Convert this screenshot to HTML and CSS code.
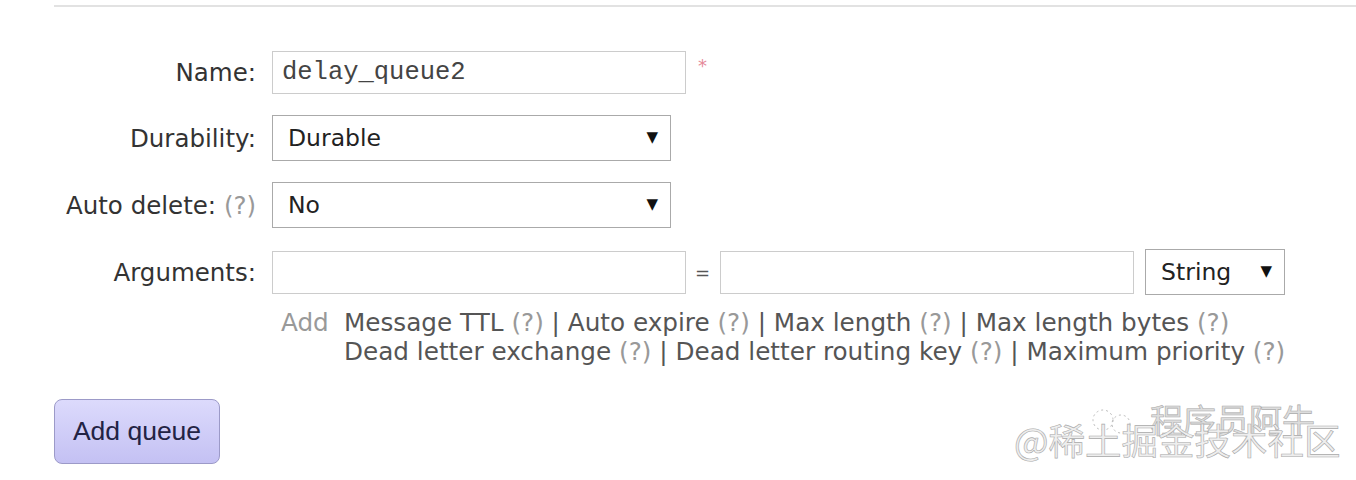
FILE: index.html
```html
<!DOCTYPE html>
<html>
<head>
<meta charset="utf-8">
<link rel="stylesheet" href="styles.css">
</head>
<body>
<div class="rule"></div>
<form class="form">
  <label class="lbl">Name:</label>
  <div class="field">
    <div class="input name-input">delay_queue2</div>
    <span class="req">*</span>
  </div>

  <label class="lbl">Durability:</label>
  <div class="field">
    <div class="select wide">Durable<span class="arrow">▼</span></div>
  </div>

  <label class="lbl">Auto delete: <span class="help">(?)</span></label>
  <div class="field">
    <div class="select wide">No<span class="arrow">▼</span></div>
  </div>

  <label class="lbl">Arguments:</label>
  <div class="field">
    <div class="input arg-input"></div>
    <span class="eq">=</span>
    <div class="input arg-input arg-val"></div>
    <div class="select small">String<span class="arrow">▼</span></div>
  </div>

  <span></span>
  <div class="adds">
    <span class="add">Add</span>
    <div class="lines">
      <div>Message TTL <span class="help">(?)</span> | Auto expire <span class="help">(?)</span> | Max length <span class="help">(?)</span> | Max length bytes <span class="help">(?)</span></div>
      <div>Dead letter exchange <span class="help">(?)</span> | Dead letter routing key <span class="help">(?)</span> | Maximum priority <span class="help">(?)</span></div>
    </div>
  </div>
</form>
<div class="actions">
  <button class="btn" type="button">Add queue</button>
</div>
<div class="watermark">
  <svg class="wm-icon" width="60" height="30" viewBox="0 0 60 30">
    <circle cx="18" cy="14" r="10" fill="none" stroke="#bbb" stroke-width="1" stroke-dasharray="2 3"/>
    <circle cx="36" cy="18" r="9" fill="none" stroke="#bbb" stroke-width="1" stroke-dasharray="2 3"/>
  </svg>
  <span class="wm1">程序员阿牛</span>
  <span class="wm2">@稀土掘金技术社区</span>
</div>
</body>
</html>
```
FILE: styles.css
```css
html, body {
  margin: 0;
  padding: 0;
  background: #fff;
}
body {
  font-family: "DejaVu Sans", sans-serif;
  color: #333;
  font-size: 24.5px;
  width: 1356px;
  height: 480px;
  overflow: hidden;
  position: relative;
}
.rule {
  margin: 5px 0 0 54px;
  height: 2px;
  background: #e2e2e2;
}
.form {
  display: grid;
  grid-template-columns: 256px auto;
  column-gap: 16px;
  row-gap: 21px;
  margin-top: 44px;
  align-items: center;
}
.lbl {
  text-align: right;
  color: #333;
  white-space: nowrap;
}
.help {
  color: #999;
}
.field {
  display: flex;
  align-items: center;
}
.input {
  box-sizing: border-box;
  border: 1px solid #ccc;
  height: 43px;
  background: #fff;
  display: flex;
  align-items: center;
  padding-left: 9px;
}
.name-input {
  width: 414px;
  font-family: "Liberation Mono", monospace;
  font-size: 25.5px;
  color: #444;
}
.req {
  color: #e58a9a;
  margin-left: 12px;
  align-self: flex-start;
  margin-top: 4px;
  font-size: 18px;
}
.select {
  box-sizing: border-box;
  border: 1px solid #aaa;
  height: 46px;
  background: #fff;
  display: flex;
  align-items: center;
  padding-left: 15px;
  position: relative;
  color: #222;
  font-size: 23.5px;
}
.select.wide {
  width: 399px;
}
.select.small {
  width: 140px;
  margin-left: 11px;
}
.arrow {
  position: absolute;
  right: 12px;
  top: 12px;
  font-size: 15px;
  color: #111;
}
.arg-input {
  width: 414px;
}
.eq {
  margin: 0 10px 0 9px;
  color: #555;
  font-size: 18px;
}
.arg-val {
  width: 414px;
}
.adds {
  display: flex;
  color: #555;
  padding-left: 9px;
  margin-top: -8px;
  line-height: 29px;
  font-size: 24.7px;
}
.add {
  color: #999;
  width: 63px;
}
.actions {
  margin: 33px 0 0 54px;
}
.btn {
  box-sizing: border-box;
  width: 166px;
  height: 65px;
  border-radius: 8px;
  border: 1px solid #9c9ac8;
  background: linear-gradient(#dcdafc, #c4c1f3);
  font-family: "Liberation Sans", Arial, sans-serif;
  font-size: 26.5px;
  color: #232344;
  padding: 0;
}
.watermark {
  position: absolute;
  left: 1010px;
  top: 398px;
  width: 346px;
  height: 80px;
  font-family: "Noto Sans CJK SC", sans-serif;
}
.wm-icon {
  position: absolute;
  left: 75px;
  top: 8px;
}
.wm1 {
  position: absolute;
  left: 140px;
  top: -3px;
  font-size: 33px;
  color: #ddd;
  -webkit-text-stroke: 0.6px #aaa;
}
.wm2 {
  position: absolute;
  left: 4px;
  top: 15px;
  font-size: 36.5px;
  color: #eee;
  -webkit-text-stroke: 0.6px #aaa;
}
```
